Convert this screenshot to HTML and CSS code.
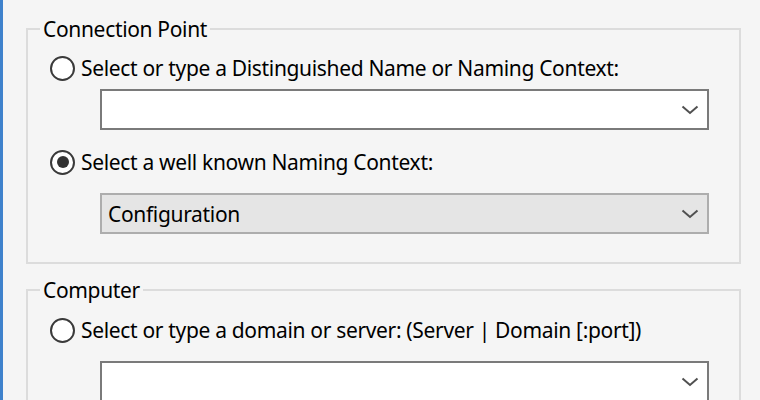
FILE: index.html
```html
<!DOCTYPE html>
<html>
<head>
<meta charset="utf-8">
<link rel="stylesheet" href="styles.css">
</head>
<body>
<div class="page">
  <div class="group group-conn">
    <div class="legend">Connection Point</div>
    <label class="radio-row first">
      <span class="radio"></span>
      <span class="label">Select or type a Distinguished Name or Naming Context:</span>
    </label>
    <div class="combo combo-edit combo-first">
      <span class="combo-text"></span>
      <svg class="chev" width="18" height="10" viewBox="0 0 18 10"><polyline points="1.5,1.5 9,8 16.5,1.5" fill="none" stroke="#505050" stroke-width="2"/></svg>
    </div>
    <label class="radio-row second">
      <span class="radio checked"></span>
      <span class="label">Select a well known Naming Context:</span>
    </label>
    <div class="combo combo-list">
      <span class="combo-text">Configuration</span>
      <svg class="chev" width="18" height="10" viewBox="0 0 18 10"><polyline points="1.5,1.5 9,8 16.5,1.5" fill="none" stroke="#505050" stroke-width="2"/></svg>
    </div>
  </div>
  <div class="group group-comp">
    <div class="legend">Computer</div>
    <label class="radio-row first-comp">
      <span class="radio"></span>
      <span class="label">Select or type a domain or server: (Server | Domain [:port])</span>
    </label>
    <div class="combo combo-edit combo-comp">
      <span class="combo-text"></span>
      <svg class="chev" width="18" height="10" viewBox="0 0 18 10"><polyline points="1.5,1.5 9,8 16.5,1.5" fill="none" stroke="#505050" stroke-width="2"/></svg>
    </div>
  </div>
</div>
</body>
</html>
```
FILE: styles.css
```css
html, body {
  margin: 0;
  padding: 0;
  height: 100%;
  overflow: hidden;
}
body {
  background: #f5f5f5;
  font-family: "Noto Sans", "Open Sans", sans-serif;
  font-size: 21px;
  letter-spacing: -0.33px;
  color: #000;
}
.page {
  border-left: 3px solid #3f82cc;
  height: 100%;
  box-sizing: border-box;
  padding: 28px 0 0 23px;
  overflow: hidden;
}
.group {
  box-sizing: border-box;
  width: 715px;
  border: 2px solid #dcdcdc;
}
.group-conn {
  height: 236px;
}
.group-comp {
  margin-top: 25px;
  border-bottom: none;
}
.legend {
  display: block;
  width: fit-content;
  margin: -13px 0 0 12px;
  padding: 0 3px;
  line-height: 24px;
  height: 24px;
  background: #f5f5f5;
}
.radio-row {
  display: flex;
  align-items: center;
  height: 30px;
  margin-left: 22px;
}
.radio-row.first { margin-top: 12px; }
.radio-row.second { margin-top: 17px; }
.radio-row.first-comp { margin-top: 13px; }
.radio {
  box-sizing: border-box;
  width: 25px;
  height: 25px;
  border: 2px solid #3a3a3a;
  border-radius: 50%;
  background: #fff;
  display: flex;
  align-items: center;
  justify-content: center;
  flex: none;
}
.radio.checked::after {
  content: "";
  width: 12px;
  height: 12px;
  border-radius: 50%;
  background: #333;
}
.label {
  margin-left: 6px;
  white-space: nowrap;
}
.combo {
  box-sizing: border-box;
  width: 609px;
  height: 41px;
  margin-left: 72px;
  border: 2px solid #7a7a7a;
  background: #fff;
  display: flex;
  align-items: center;
  padding: 0 8px 0 6px;
}
.combo-first { margin-top: 6px; }
.combo-list {
  margin-top: 16px;
  background: #e5e5e5;
  border-color: #adadad;
}
.combo-comp { margin-top: 16px; }
.combo-text {
  flex: 1;
  white-space: nowrap;
}
.chev {
  flex: none;
  display: block;
}
```
